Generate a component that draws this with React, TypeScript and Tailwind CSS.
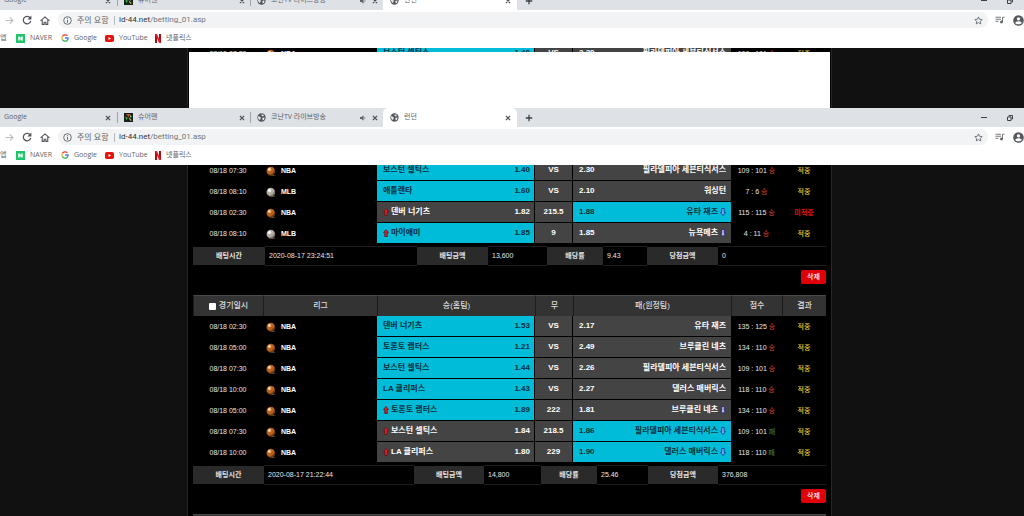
import React from "react";

type Side = "home" | "away";
type Sport = "NBA" | "MLB";

interface Bet {
  date: string;
  league: Sport;
  home: string;
  homeOdds: string;
  line: string;
  away: string;
  awayOdds: string;
  pick: Side;
  handicap?: boolean;
  score: string;
  outcome: "승" | "패";
  hit: boolean;
}

interface Summary {
  time: string;
  stake: string;
  odds: string;
  payout: string;
  widths: string[];
}

const bet = (
  date: string,
  league: Sport,
  home: string,
  homeOdds: string,
  line: string,
  awayOdds: string,
  away: string,
  pick: Side,
  score: string,
  outcome: "승" | "패" = "승",
  handicap = false,
  hit = true,
): Bet => ({ date, league, home, homeOdds, line, away, awayOdds, pick, handicap, score, outcome, hit });

const firstBets: Bet[] = [
  bet("08/18 07:30", "NBA", "보스턴 셀틱스", "1.40", "VS", "2.30", "필라델피아 세븐티식서스", "home", "109 : 101"),
  bet("08/18 08:10", "MLB", "애틀랜타", "1.60", "VS", "2.10", "워싱턴", "home", "7 : 6"),
  bet("08/18 02:30", "NBA", "덴버 너기츠", "1.82", "215.5", "1.88", "유타 재즈", "away", "115 : 115", "승", true, false),
  bet("08/18 08:10", "MLB", "마이애미", "1.85", "9", "1.85", "뉴욕메츠", "home", "4 : 11", "승", true),
];

const secondBets: Bet[] = [
  bet("08/18 02:30", "NBA", "덴버 너기츠", "1.53", "VS", "2.17", "유타 재즈", "home", "135 : 125"),
  bet("08/18 05:00", "NBA", "토론토 랩터스", "1.21", "VS", "2.49", "브루클린 네츠", "home", "134 : 110"),
  bet("08/18 07:30", "NBA", "보스턴 셀틱스", "1.44", "VS", "2.26", "필라델피아 세븐티식서스", "home", "109 : 101"),
  bet("08/18 10:00", "NBA", "LA 클리퍼스", "1.43", "VS", "2.27", "댈러스 매버릭스", "home", "118 : 110"),
  bet("08/18 05:00", "NBA", "토론토 랩터스", "1.89", "222", "1.81", "브루클린 네츠", "home", "134 : 110", "승", true),
  bet("08/18 07:30", "NBA", "보스턴 셀틱스", "1.84", "218.5", "1.86", "필라델피아 세븐티식서스", "away", "109 : 101", "패", true),
  bet("08/18 10:00", "NBA", "LA 클리퍼스", "1.80", "229", "1.90", "댈러스 매버릭스", "away", "118 : 110", "패", true),
];

const firstSummary: Summary = {
  time: "2020-08-17 23:24:51",
  stake: "13,600",
  odds: "9.43",
  payout: "0",
  widths: ["w-[72px]", "w-[152px]", "w-[71px]", "w-[59px]", "w-[56px]", "w-[44px]", "w-[71px]", ""],
};

const secondSummary: Summary = {
  time: "2020-08-17 21:22:44",
  stake: "14,800",
  odds: "25.46",
  payout: "376,808",
  widths: ["w-[71px]", "w-[150px]", "w-[70px]", "w-[57px]", "w-[56px]", "w-[51px]", "w-[70px]", ""],
};

/* ---------- icons ---------- */

function Globe() {
  return (
    <svg viewBox="0 0 16 16" className="size-[9px] shrink-0">
      <circle cx="8" cy="8" r="7.4" fill="#54585d" />
      <path d="M2 5.500 6.500 7.500v2.600l-1.500 2.400A6 6 0 0 1 2 5.500zM8.500 2l4 1.600L10.500 6 8 5z" fill="#e4e6ea" />
      <path d="M9.500 8.600l4-.6-.8 3.200-2.700 2z" fill="#e4e6ea" />
    </svg>
  );
}

function Cross() {
  return (
    <svg viewBox="0 0 10 10" className="size-[6px] shrink-0" fill="none" stroke="#4a4d51" strokeWidth="2">
      <path d="M1.500 1.500l7 7M8.500 1.500l-7 7" />
    </svg>
  );
}

function Speaker() {
  return (
    <svg viewBox="0 0 12 12" className="size-[6px] shrink-0" fill="#5f6368">
      <path d="M0 4h3l4-3.500v11L3 8H0z" />
      <path d="M8.500 3.500c1.800 1 1.800 4 0 5" fill="none" stroke="#5f6368" strokeWidth="1.300" />
    </svg>
  );
}

function SureMan() {
  return (
    <svg viewBox="0 0 18 18" className="size-[9px] shrink-0">
      <rect width="18" height="18" fill="#16201a" />
      <path d="M4 2h9l-4 6z" fill="#d2482f" />
      <path d="M2 7l6 2-3 6z" fill="#3c9b4b" />
      <path d="M9 8l7 7h-4z" fill="#e3d04a" />
      <path d="M12 3l4 5-4 1z" fill="#7fc26a" />
    </svg>
  );
}

function Forward() {
  return (
    <svg viewBox="0 0 16 16" className="size-[9px]" fill="none" stroke="#b4b7bb" strokeWidth="1.800">
      <path d="M1 8h13M8.500 2.500 14 8l-5.500 5.500" />
    </svg>
  );
}

function Reload() {
  return (
    <svg viewBox="0 0 16 16" className="size-[10px]">
      <path d="M13 4.500A6 6 0 1 0 14 9.500" fill="none" stroke="#4e5257" strokeWidth="2" />
      <path d="M15 .8v6.400H8.600z" fill="#4e5257" />
    </svg>
  );
}

function Home() {
  return (
    <svg viewBox="0 0 18 16" className="h-[9px] w-[10px]" fill="none" stroke="#4e5257" strokeWidth="1.900">
      <path d="M1 8.500 9 1.500l8 7M4 7v8h3.500v-4h3v4H14V7" />
    </svg>
  );
}

function Info() {
  return (
    <svg viewBox="0 0 16 16" className="size-[9px] shrink-0">
      <circle cx="8" cy="8" r="6.800" fill="none" stroke="#5f6368" strokeWidth="1.600" />
      <path d="M7.200 7h1.700v5H7.200zM7.200 4h1.700v1.700H7.200z" fill="#5f6368" />
    </svg>
  );
}

function Star() {
  return (
    <svg viewBox="0 0 24 24" className="size-[9px]" fill="none" stroke="#5f6368" strokeWidth="2.200">
      <path d="M12 2.500l2.900 6.300 6.900.8-5.100 4.700 1.400 6.800L12 17.700l-6.100 3.400 1.400-6.800-5.100-4.700 6.900-.8z" />
    </svg>
  );
}

function Queue() {
  return (
    <svg viewBox="0 0 20 16" className="h-[8px] w-[10px]" fill="none" stroke="#5f6368" strokeWidth="1.700">
      <path d="M1 2.500h11M1 6.500h11M1 10.500h6" />
      <path d="M15 12V2.500h4" />
      <circle cx="13" cy="12" r="2.200" fill="#5f6368" />
    </svg>
  );
}

function Profile() {
  return (
    <svg viewBox="0 0 20 20" className="size-[11px]">
      <circle cx="10" cy="10" r="9.600" fill="#55595e" />
      <circle cx="10" cy="7" r="3" fill="#fff" />
      <path d="M4 14.500c1.500-4 10.500-4 12 0-2.500 3.300-9.500 3.300-12 0z" fill="#fff" />
    </svg>
  );
}

function NaverLogo() {
  return (
    <svg viewBox="0 0 18 18" className="size-[9px] shrink-0">
      <rect width="18" height="18" fill="#1fc46b" />
      <path d="M4.500 5h3l3 4V5h3v8h-3l-3-4v4h-3z" fill="#fff" />
    </svg>
  );
}

function GoogleLogo() {
  return (
    <svg viewBox="0 0 16 16" className="size-[8px] shrink-0" fill="none" strokeWidth="2.600">
      <path d="M13 3.800A6.300 6.300 0 0 0 2.700 4.900" stroke="#ea4335" />
      <path d="M2.700 4.900a6.300 6.300 0 0 0 0 6.200" stroke="#fbbc05" />
      <path d="M2.700 11.100a6.300 6.300 0 0 0 9.500 1.700" stroke="#34a853" />
      <path d="M12.200 12.800A6.300 6.300 0 0 0 14.300 8H8" stroke="#4285f4" />
    </svg>
  );
}

function YouTubeLogo() {
  return (
    <svg viewBox="0 0 18 14" className="h-[7px] w-[9px] shrink-0">
      <rect width="18" height="14" rx="3.500" fill="#e8130c" />
      <path d="M7 4l5 3-5 3z" fill="#fff" />
    </svg>
  );
}

function NetflixLogo() {
  return (
    <svg viewBox="0 0 12 18" className="h-[9px] w-[6px] shrink-0">
      <path d="M0 0h4v18H0zM8 0h4v18H8z" fill="#a80f16" />
      <path d="M0 0h4l8 18H8z" fill="#e22028" />
    </svg>
  );
}

function Ball({ sport }: { sport: Sport }) {
  const nba = sport === "NBA";
  return (
    <svg viewBox="0 0 20 20" className="size-[10px] shrink-0">
      <path d="M10 17l9 1-2 2h-6z" fill="#4a4038" />
      <circle cx="9.500" cy="10" r="8.500" fill={nba ? "#b8621f" : "#b4ada5"} />
      <path d="M17 6a8.500 8.500 0 0 1-12 11.500C12 17 16 12 17 6z" fill={nba ? "#7c3b12" : "#807670"} />
      <circle cx="7" cy="7" r="3.600" fill={nba ? "#e9b27a" : "#f0ebe5"} />
      <circle cx="6.500" cy="6.500" r="1.800" fill={nba ? "#fbe3c6" : "#ffffff"} />
    </svg>
  );
}

function UpArrow() {
  return (
    <svg viewBox="0 0 12 16" className="h-[8px] w-[6px] shrink-0">
      <path d="M6 1l5 6H8.500v8h-5V7H1z" fill="#e0202a" stroke="#5a1216" strokeWidth="1.500" />
    </svg>
  );
}

function DownArrow({ picked }: { picked: boolean }) {
  return (
    <svg viewBox="0 0 12 16" className="h-[8px] w-[6px] shrink-0">
      <path
        d="M6 15l5-6H8.500V1h-5v8H1z"
        fill={picked ? "#6fb3ee" : "#c4c4f2"}
        stroke={picked ? "#1c3a9c" : "#26267c"}
        strokeWidth="1.800"
      />
    </svg>
  );
}

/* ---------- browser chrome ---------- */

function Tab({ icon, title, audio }: { icon: React.ReactNode; title: string; audio?: boolean }) {
  return (
    <div className="flex w-[133px] shrink-0 items-center border-l border-[#9fa2a7] pl-[6px] pr-[5px]">
      {icon}
      <span className="ml-[5px] flex-1 whitespace-nowrap">{title}</span>
      {audio && <Speaker />}
      <button aria-label="탭 닫기" className="ml-[6px]">
        <Cross />
      </button>
    </div>
  );
}

function BrowserBar() {
  return (
    <header className="shrink-0 bg-white font-['Open_Sans','Noto_Sans_CJK_KR',sans-serif] text-[7px] text-[#5f6368]">
      <div className="flex h-[19px] items-stretch bg-[#dee1e6]">
        <div className="flex w-[117px] shrink-0 items-center pl-1 pr-[6px]">
          <span className="flex-1">Google</span>
          <button aria-label="탭 닫기">
            <Cross />
          </button>
        </div>
        <div className="flex items-center [&>div]:h-[11px]">
          <Tab icon={<SureMan />} title="슈어맨" />
          <Tab icon={<Globe />} title="코난TV 라이브방송" audio />
        </div>
        <div className="flex w-[134px] shrink-0 items-center rounded-t-[5px] bg-white pl-[7px] pr-[6px]">
          <Globe />
          <span className="ml-[5px] flex-1">런던</span>
          <button aria-label="탭 닫기">
            <Cross />
          </button>
        </div>
        <button aria-label="새 탭" className="ml-2 flex items-center">
          <svg viewBox="0 0 10 10" className="size-[8px]" stroke="#3c4043" strokeWidth="1.600">
            <path d="M1 5h8M5 1v8" />
          </svg>
        </button>
        <div className="ml-auto flex items-center gap-5 pr-[11px]">
          <button aria-label="최소화" className="flex">
            <svg viewBox="0 0 6 6" className="size-[6px]" stroke="#3c4043">
              <path d="M0 2.500h6" />
            </svg>
          </button>
          <button aria-label="이전 크기로" className="flex">
            <svg viewBox="0 0 12 12" className="size-[6px]" fill="none" stroke="#3c4043" strokeWidth="2">
              <path d="M1 4h7v7H1zM4 3V1h7v7H9" />
            </svg>
          </button>
        </div>
      </div>
      <div className="flex h-[20px] items-center">
        <div className="flex w-[58px] shrink-0 items-center gap-[8px] pl-[5px]">
          <button aria-label="앞으로"><Forward /></button>
          <button aria-label="새로고침"><Reload /></button>
          <button aria-label="홈"><Home /></button>
        </div>
        <div className="flex h-[16px] flex-1 items-center rounded-full bg-[#f1f3f4] pl-[5px] pr-[5px] text-[8px]">
          <Info />
          <span className="ml-[5px] w-[37px] shrink-0">주의 요함</span>
          <span className="mr-1 h-[9px] w-px bg-[#b5b8bc]" />
          <p className="flex-1 font-[Roboto,'Noto_Sans_CJK_KR',sans-serif] text-[#70757a]">
            <span className="text-[#303235]">ld-44.net</span>/betting_01.asp
          </p>
          <button aria-label="북마크"><Star /></button>
        </div>
        <div className="flex w-9 shrink-0 items-center gap-[8px] overflow-hidden pl-[7px]">
          <button aria-label="재생목록" className="shrink-0"><Queue /></button>
          <button aria-label="프로필" className="shrink-0"><Profile /></button>
        </div>
      </div>
      <nav className="flex h-[18px] items-center pb-[2px] [&>a]:flex [&>a]:items-center [&>a]:gap-[5px]">
        <a href="#apps" className="w-[16px]">앱</a>
        <a href="#naver" className="w-[45px]"><NaverLogo />NAVER</a>
        <a href="#google" className="w-[44px]"><GoogleLogo />Google</a>
        <a href="#youtube" className="w-[50px]"><YouTubeLogo />YouTube</a>
        <a href="#netflix"><NetflixLogo />넷플릭스</a>
      </nav>
    </header>
  );
}

/* ---------- betting history ---------- */

const picked = "bg-[#00bcd8] text-[#06303c]";
const plain = "bg-[#444444] text-white";

function BetRow({ row }: { row: Bet }) {
  const homePicked = row.pick === "home";
  return (
    <tr className="h-[21px]">
      <td className="text-center">{row.date}</td>
      <td>
        <div className="flex items-center gap-[5px] pl-[3px] font-bold text-white">
          <Ball sport={row.league} />
          <span>{row.league}</span>
        </div>
      </td>
      <td className={`border-b border-r border-black ${homePicked ? picked : plain}`}>
        <div className="flex items-center gap-[2px] pl-[6px] pr-[4px] text-[8px] font-bold">
          {row.handicap && <UpArrow />}
          <span className="flex-1">{row.home}</span>
          <span>{row.homeOdds}</span>
        </div>
      </td>
      <td className="border-b border-r border-black bg-[#444444] text-center text-[8px] font-bold text-white">{row.line}</td>
      <td className={`border-b border-black ${homePicked ? plain : picked}`}>
        <div className="flex items-center gap-[2px] pl-[6px] pr-[5px] text-[8px] font-bold">
          <span className="flex-1">{row.awayOdds}</span>
          <span>{row.away}</span>
          {row.handicap && <DownArrow picked={!homePicked} />}
        </div>
      </td>
      <td className="text-center">
        {row.score} <span className={row.outcome === "승" ? "text-[#d8452f]" : "text-[#4c8a36]"}>{row.outcome}</span>
      </td>
      <td className={row.hit ? "text-center font-medium text-[#ecc52f]" : "text-center font-bold text-[#e01212]"}>
        {row.hit ? "적중" : "미적중"}
      </td>
    </tr>
  );
}

function SlipTable({ rows, header, id }: { rows: Bet[]; header?: boolean; id: string }) {
  const head = "border-l border-t border-l-[#1c1c1c] border-t-[#4a4a4a] bg-[#333333] font-medium";
  return (
    <table className="w-full table-fixed border-separate border-spacing-0 leading-[10px]">
      <colgroup>
        <col className="w-[70px]" />
        <col className="w-[114px]" />
        <col />
        <col className="w-[38px]" />
        <col />
        <col className="w-[51px]" />
        <col className="w-[44px]" />
      </colgroup>
      {header && (
        <thead>
          <tr className="h-[21px] text-[8px] text-[#dddddd]">
            <th className={head}>
              <label className="flex items-center justify-center gap-[3px]" htmlFor={id}>
                <input id={id} type="checkbox" className="size-[7px] appearance-none rounded-[1px] bg-white" />
                경기일시
              </label>
            </th>
            <th className={head}>리그</th>
            <th className={head}>승(홈팀)</th>
            <th className={head}>무</th>
            <th className={head}>패(원정팀)</th>
            <th className={head}>점수</th>
            <th className={head}>결과</th>
          </tr>
        </thead>
      )}
      <tbody>
        {rows.map((row, i) => (
          <BetRow key={i} row={row} />
        ))}
      </tbody>
    </table>
  );
}

function SlipSummary({ summary }: { summary: Summary }) {
  const cells: [string, string][] = [
    ["배팅시간", summary.time],
    ["배팅금액", summary.stake],
    ["배당률", summary.odds],
    ["당첨금액", summary.payout],
  ];
  return (
    <table className="mt-[2px] w-full table-fixed border-y border-[#1d1d1d] leading-[10px]">
      <colgroup>
        {summary.widths.map((w, i) => (
          <col key={i} className={w} />
        ))}
      </colgroup>
      <tbody>
        <tr className="h-[19px]">
          {cells.map(([label, value]) => (
            <React.Fragment key={label}>
              <th className="border-y border-black bg-[#2a2a2a] font-bold text-[#e4e4e4]">{label}</th>
              <td className="pl-[4px]">{value}</td>
            </React.Fragment>
          ))}
        </tr>
      </tbody>
    </table>
  );
}

function DeleteButton() {
  return (
    <div className="mt-1 mb-[11px] flex justify-end">
      <button className="h-[14px] w-[25px] rounded-[2px] bg-[#e00008] font-medium leading-[10px] text-white">삭제</button>
    </div>
  );
}

function HistoryPage({ children }: { children: React.ReactNode }) {
  return (
    <main className="min-h-0 flex-1 overflow-hidden bg-[#111111] pr-[5px]">
      <div className="mx-auto h-full max-w-[645px] overflow-hidden border-x border-[#262626] bg-black px-[5px] font-['Liberation_Sans','Noto_Sans_CJK_KR',sans-serif] text-[7px] text-[#e6e6e6]">
        <div className="-mt-[5px]">{children}</div>
      </div>
    </main>
  );
}

export default function App() {
  return (
    <div className="flex h-screen flex-col overflow-hidden bg-[#111111]">
      <section className="relative flex h-[108px] shrink-0 flex-col overflow-hidden">
        <div className="-mt-[9px] shrink-0">
          <BrowserBar />
        </div>
        <HistoryPage>
          <SlipTable rows={firstBets.slice(0, 1)} id="all-top" />
        </HistoryPage>
        <div className="absolute inset-x-0 bottom-0 h-[56px] pr-[5px]">
          <div className="mx-auto h-full max-w-[641px] bg-white" />
        </div>
      </section>
      <section className="flex min-h-0 flex-1 flex-col">
        <BrowserBar />
        <HistoryPage>
          <SlipTable rows={firstBets} id="all-first" />
          <SlipSummary summary={firstSummary} />
          <DeleteButton />
          <SlipTable rows={secondBets} header id="all-second" />
          <SlipSummary summary={secondSummary} />
          <DeleteButton />
          <div className="h-[21px] border-t border-[#4a4a4a] bg-[#333333]" />
        </HistoryPage>
      </section>
    </div>
  );
}
